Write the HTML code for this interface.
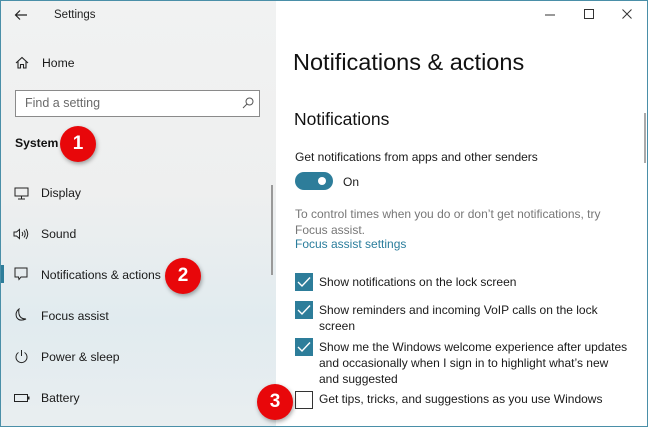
<!DOCTYPE html>
<html><head><style>
*{margin:0;padding:0;box-sizing:border-box}
body{width:648px;height:427px;overflow:hidden;font-family:"Liberation Sans",sans-serif;position:relative;background:#fff;color:#000}
.frame{position:absolute;inset:0;border:1px solid #4a8fa8;pointer-events:none;z-index:10}
.side{position:absolute;left:0;top:0;width:276px;height:427px;background:linear-gradient(180deg,#f1f2f2 0%,#eeefef 45%,#e1ebef 75%,#e9eef0 100%)}
.t{position:absolute;white-space:nowrap}
.nav{font-size:12.2px;color:#1a1a1a}
.badge{position:absolute;width:36px;height:36px;border-radius:50%;background:#e8070a;color:#fff;font-weight:bold;font-size:19px;text-align:center;line-height:36px;box-shadow:1px 2px 4px rgba(0,0,0,.35)}
.cb{position:absolute;left:295px;width:18px;height:18px;background:#2d7d9a}
.cb svg{position:absolute;left:2px;top:3px}
.lbl{position:absolute;left:319px;font-size:12px;line-height:16px;color:#1a1a1a}
</style></head><body>
<div class="side"></div>
<svg class="t" style="left:14px;top:9px" width="14" height="12"><path d="M13 6H2M6 1.5L1.5 6 6 10.5" stroke="#222" stroke-width="1.2" fill="none"/></svg>
<div class="t" style="left:54px;top:9px;font-size:11.5px;color:#222">Settings</div>
<svg class="t" style="left:15px;top:56px" width="14" height="13"><path d="M1 7L7 1.5 13 7M3 5.5V12H5.5V8.5H8.5V12H11V5.5" stroke="#222" stroke-width="1.1" fill="none"/></svg>
<div class="t nav" style="left:42px;top:56px">Home</div>
<div class="t" style="left:15px;top:90px;width:245px;height:27px;border:1.5px solid #8a8a8a;background:#fff"></div>
<div class="t" style="left:25px;top:96px;font-size:12.5px;color:#6a6a6a">Find a setting</div>
<svg class="t" style="left:242px;top:97px" width="12" height="12"><circle cx="7.5" cy="4.5" r="3.5" stroke="#555" fill="none"/><path d="M5 7L1 11" stroke="#555"/></svg>
<div class="t" style="left:15px;top:136px;font-size:12.2px;font-weight:bold;color:#111">System</div>
<div class="badge" style="left:60px;top:126px">1</div>
<svg class="t" style="left:14px;top:187px" width="15" height="13"><rect x="1" y="1" width="13" height="8" stroke="#222" fill="none"/><path d="M7.5 9V12M4 12H11" stroke="#222"/></svg>
<div class="t nav" style="left:41px;top:186px">Display</div>
<svg class="t" style="left:13px;top:228px" width="17" height="12"><path d="M1 4H3.5L6.5 1.5V10.5L3.5 8H1Z" stroke="#222" fill="none"/><path d="M9 4Q10.5 6 9 8M11 2.5Q13.5 6 11 9.5M13 1Q16.5 6 13 11" stroke="#222" fill="none"/></svg>
<div class="t nav" style="left:41px;top:227px">Sound</div>
<div class="t" style="left:1px;top:265px;width:3px;height:18px;background:#2d7d9a"></div>
<svg class="t" style="left:14px;top:267px" width="14" height="14"><path d="M1 1H13V10H7L5 12.5 4.5 10H1Z" stroke="#222" fill="none"/></svg>
<div class="t nav" style="left:41px;top:268px">Notifications &amp; actions</div>
<div class="badge" style="left:165px;top:258px">2</div>
<svg class="t" style="left:14px;top:308px" width="14" height="15"><path d="M5 1Q1 4 2.5 9Q5 14 12 11Q6 11 5 6Q4.5 3 5 1Z" stroke="#222" fill="none"/></svg>
<div class="t nav" style="left:41px;top:309px">Focus assist</div>
<svg class="t" style="left:14px;top:349px" width="15" height="15"><path d="M4.5 3.5A5.5 5.5 0 1 0 10.5 3.5" stroke="#222" fill="none"/><path d="M7.5 1V7" stroke="#222"/></svg>
<div class="t nav" style="left:41px;top:350px">Power &amp; sleep</div>
<svg class="t" style="left:14px;top:394px" width="16" height="8"><rect x="0.5" y="0.5" width="13" height="7" stroke="#222" fill="none"/><rect x="14" y="2.5" width="1.5" height="3" fill="#222"/></svg>
<div class="t nav" style="left:41px;top:391px">Battery</div>
<div class="t" style="left:271px;top:185px;width:2px;height:90px;background:#999"></div>

<svg class="t" style="left:545px;top:14px" width="12" height="2"><path d="M0 1H10" stroke="#333"/></svg>
<svg class="t" style="left:584px;top:9px" width="11" height="11"><rect x="0.5" y="0.5" width="9" height="9" stroke="#333" fill="none"/></svg>
<svg class="t" style="left:622px;top:9px" width="11" height="11"><path d="M0.5 0.5L9.5 9.5M9.5 0.5L0.5 9.5" stroke="#333"/></svg>
<div class="t" style="left:293px;top:49px;font-size:23.5px;color:#111">Notifications &amp; actions</div>
<div class="t" style="left:294px;top:109px;font-size:17.5px;color:#111">Notifications</div>
<div class="t" style="left:295px;top:150px;font-size:12px;color:#1a1a1a">Get notifications from apps and other senders</div>
<div class="t" style="left:295px;top:172px;width:38px;height:18px;border-radius:9px;background:#2d7d9a"></div>
<div class="t" style="left:318px;top:177px;width:8px;height:8px;border-radius:50%;background:#fff"></div>
<div class="t" style="left:343px;top:175px;font-size:12px;color:#1a1a1a">On</div>
<div class="t" style="left:295px;top:206px;font-size:12px;line-height:16px;color:#777">To control times when you do or don’t get notifications, try<br>Focus assist.</div>
<div class="t" style="left:295px;top:237px;font-size:12px;color:#2a7d9c">Focus assist settings</div>
<div class="t" style="left:644px;top:113px;width:2px;height:50px;background:#aaa"></div>
<div class="cb" style="top:273px"><svg width="14" height="12"><path d="M1 6L5 10 13 1.5" stroke="#fff" stroke-width="1.4" fill="none"/></svg></div>
<div class="lbl" style="top:274px">Show notifications on the lock screen</div>
<div class="cb" style="top:301px"><svg width="14" height="12"><path d="M1 6L5 10 13 1.5" stroke="#fff" stroke-width="1.4" fill="none"/></svg></div>
<div class="lbl" style="top:302px">Show reminders and incoming VoIP calls on the lock<br>screen</div>
<div class="cb" style="top:338px"><svg width="14" height="12"><path d="M1 6L5 10 13 1.5" stroke="#fff" stroke-width="1.4" fill="none"/></svg></div>
<div class="lbl" style="top:339px">Show me the Windows welcome experience after updates<br>and occasionally when I sign in to highlight what’s new<br>and suggested</div>
<div class="t" style="left:295px;top:391px;width:18px;height:18px;border:1.5px solid #333;background:#fff"></div>
<div class="lbl" style="top:391px">Get tips, tricks, and suggestions as you use Windows</div>
<div class="badge" style="left:257px;top:384px">3</div>
<div class="frame"></div>
</body></html>
